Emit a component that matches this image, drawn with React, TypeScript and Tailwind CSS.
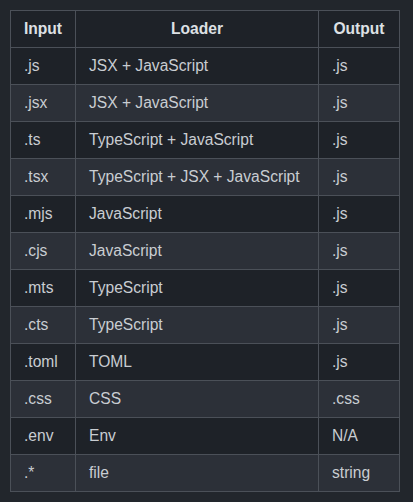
import React from "react";

const rows: [string, string, string][] = [
  [".js", "JSX + JavaScript", ".js"],
  [".jsx", "JSX + JavaScript", ".js"],
  [".ts", "TypeScript + JavaScript", ".js"],
  [".tsx", "TypeScript + JSX + JavaScript", ".js"],
  [".mjs", "JavaScript", ".js"],
  [".cjs", "JavaScript", ".js"],
  [".mts", "TypeScript", ".js"],
  [".cts", "TypeScript", ".js"],
  [".toml", "TOML", ".js"],
  [".css", "CSS", ".css"],
  [".env", "Env", "N/A"],
  [".*", "file", "string"],
];

const App = () => {
  return (
    <div className="min-h-[502px] w-full bg-[#22262c] pt-[10px] pl-[10px] font-['Liberation_Sans',Arial,sans-serif]">
      <table className="w-[390px] table-fixed border-collapse border border-[#4b5058] text-[15.6px] text-[#c9cdd2] whitespace-nowrap">
        <thead>
          <tr className="h-[37px] bg-[#1e2228] text-[#dde0e4]">
            <th className="w-[65px] border border-[#4b5058] text-center font-bold">Input</th>
            <th className="w-[243px] border border-[#4b5058] text-center font-bold">Loader</th>
            <th className="border border-[#4b5058] text-center font-bold">Output</th>
          </tr>
        </thead>
        <tbody>
          {rows.map((r, i) => (
            <tr
              key={r[0]}
              className={i % 2 === 0 ? "h-[37px] bg-[#1e2228]" : "h-[37px] bg-[#2c3038]"}
            >
              <td className="border border-[#4b5058] px-[13px]">{r[0]}</td>
              <td className="border border-[#4b5058] px-[13px]">{r[1]}</td>
              <td className="border border-[#4b5058] px-[13px]">{r[2]}</td>
            </tr>
          ))}
        </tbody>
      </table>
    </div>
  );
};

export default App;
